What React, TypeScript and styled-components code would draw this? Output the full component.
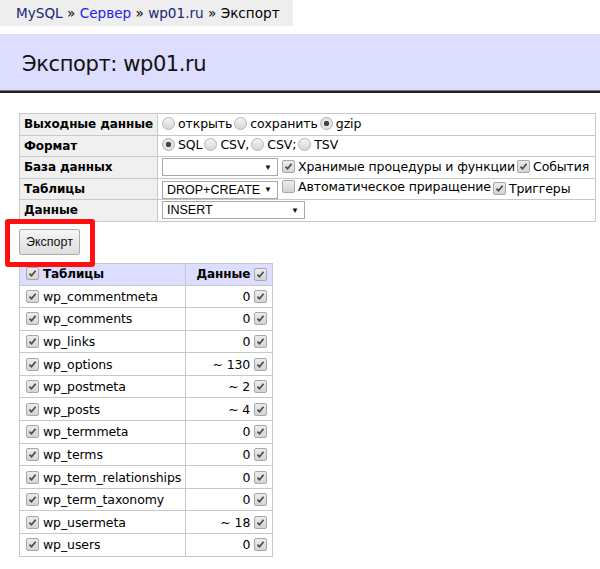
import React from 'react';
import styled, { createGlobalStyle } from 'styled-components';

const GlobalStyle = createGlobalStyle`
  body {
    margin: 0;
    background: #fff;
    font-family: "DejaVu Sans", Verdana, sans-serif;
    font-size: 12.5px;
    letter-spacing: -0.1px;
    color: #000;
  }
`;

const Page = styled.div`
  position: relative;
  width: 600px;
  min-height: 569px;
`;

const Breadcrumbs = styled.div`
  display: inline-block;
  background: #eeeeee;
  padding: 5px 13px 5px 16px;
  height: 16px;
  line-height: 16px;
  font-size: 13.6px;
  letter-spacing: 0;
`;

const Crumb = styled.a<{ $visited?: boolean }>`
  color: ${({ $visited }) => ($visited ? '#22247a' : '#2323e8')};
  text-decoration: none;
`;

const Header = styled.h1`
  margin: 8px 0 0;
  height: 57px;
  line-height: 60px;
  padding-left: 22px;
  background: #ddddff;
  border-bottom: 2px solid #222;
  box-shadow: inset 0 -1px 0 #777;
  font-size: 21px;
  letter-spacing: -0.4px;
  font-weight: normal;
  color: #111;
`;

const Content = styled.div`
  padding: 20px 0 0 19px;
`;

const FormTable = styled.table`
  border-collapse: collapse;
  width: 567px;
  border: 1px solid #c8c8c8;
`;

const Row = styled.tr`
  height: 21.5px;
`;

const LabelCell = styled.th`
  text-align: left;
  font-weight: bold;
  font-size: 12px;
  background: #f0f0f0;
  border: 1px solid #c8c8c8;
  padding: 0 4px;
  white-space: nowrap;
  width: 130px;
`;

const ValueCell = styled.td`
  border: 1px solid #c8c8c8;
  padding: 0 4px;
  white-space: nowrap;
`;

const Option = styled.label`
  display: inline-flex;
  align-items: center;
  gap: 3px;
  margin-right: 2px;
`;

const Radio = styled.span<{ $on?: boolean }>`
  display: inline-block;
  box-sizing: border-box;
  width: 13px;
  height: 13px;
  border-radius: 50%;
  border: 1px solid #b4b4b4;
  background: ${({ $on }) =>
    $on
      ? 'radial-gradient(circle, #444 0 2.5px, #e8e8e8 3px, #d4d4d4 100%)'
      : 'linear-gradient(#f4f4f4, #d6d6d6)'};
`;

const Box = styled.span`
  display: inline-flex;
  align-items: center;
  justify-content: center;
  box-sizing: border-box;
  width: 13px;
  height: 13px;
  border: 1px solid #a8a8a8;
  border-radius: 2px;
  background: linear-gradient(#ececec, #d4d4d4);
  vertical-align: middle;
`;

const Check = ({ on = true }: { on?: boolean }) => (
  <Box>
    {on && (
      <svg width="9" height="9" viewBox="0 0 9 9">
        <path d="M1.5 4.6 L3.5 6.8 L7.6 1.8" fill="none" stroke="#4a4a4a" strokeWidth="1.7" />
      </svg>
    )}
  </Box>
);

const Select = styled.span<{ $w: number }>`
  display: inline-flex;
  align-items: center;
  justify-content: space-between;
  box-sizing: border-box;
  width: ${({ $w }) => $w}px;
  height: 18px;
  padding: 0 5px 0 4px;
  border: 1px solid #a9a9a9;
  background: #fff;
  font-family: "Liberation Sans", Arial, sans-serif;
  font-size: 12.5px;
  letter-spacing: 0;
  vertical-align: middle;
  margin-right: 4px;
`;

const Arrow = styled.span`
  font-size: 8px;
  color: #111;
`;

const Button = styled.button`
  margin-top: 7px;
  height: 26px;
  padding: 0 6px;
  font-family: "Liberation Sans", Arial, sans-serif;
  font-size: 12.5px;
  color: #111;
  border: 1px solid #acacac;
  border-radius: 2px;
  background: linear-gradient(#f6f6f6, #dedede);
`;

const Marker = styled.div`
  position: absolute;
  left: 5px;
  top: 219px;
  width: 90px;
  height: 48px;
  box-sizing: border-box;
  border: 5px solid #ff1010;
  border-radius: 3px;
  pointer-events: none;
`;

const TablesTable = styled.table`
  margin-top: 8px;
  border-collapse: collapse;
  border: 1px solid #c8c8c8;
`;

const HeadCell = styled.th<{ $right?: boolean }>`
  background: #ddddff;
  border: 1px solid #c8c8c8;
  height: 21px;
  padding: 0 5px 0 6px;
  font-weight: bold;
  font-size: 12px;
  text-align: ${({ $right }) => ($right ? 'right' : 'left')};
  white-space: nowrap;
`;

const TableRow = styled.tr`
  height: 22.6px;
`;

const NameCell = styled.td`
  border: 1px solid #c8c8c8;
  padding: 0 4px 0 6px;
  white-space: nowrap;
  width: 155px;
`;

const CountCell = styled.td`
  border: 1px solid #c8c8c8;
  padding: 0 5px 0 6px;
  text-align: right;
  white-space: nowrap;
  width: 75px;
`;

const Inline = styled.span`
  display: inline-flex;
  align-items: center;
  gap: 4px;
`;

const tables: [string, string][] = [
  ['wp_commentmeta', '0'],
  ['wp_comments', '0'],
  ['wp_links', '0'],
  ['wp_options', '~ 130'],
  ['wp_postmeta', '~ 2'],
  ['wp_posts', '~ 4'],
  ['wp_termmeta', '0'],
  ['wp_terms', '0'],
  ['wp_term_relationships', '0'],
  ['wp_term_taxonomy', '0'],
  ['wp_usermeta', '~ 18'],
  ['wp_users', '0'],
];

const App: React.FC = () => (
  <Page>
    <GlobalStyle />
    <Breadcrumbs>
      <Crumb $visited href="#">MySQL</Crumb> » <Crumb href="#">Сервер</Crumb> »{' '}
      <Crumb $visited href="#">wp01.ru</Crumb> » Экспорт
    </Breadcrumbs>
    <Header>Экспорт: wp01.ru</Header>
    <Content>
      <FormTable>
        <tbody>
          <Row>
            <LabelCell>Выходные данные</LabelCell>
            <ValueCell>
              <Option><Radio />открыть</Option>
              <Option><Radio />сохранить</Option>
              <Option><Radio $on />gzip</Option>
            </ValueCell>
          </Row>
          <Row>
            <LabelCell>Формат</LabelCell>
            <ValueCell>
              <Option><Radio $on />SQL</Option>
              <Option><Radio />CSV,</Option>
              <Option><Radio />CSV;</Option>
              <Option><Radio />TSV</Option>
            </ValueCell>
          </Row>
          <Row>
            <LabelCell>База данных</LabelCell>
            <ValueCell>
              <Select $w={116}><span /><Arrow>▼</Arrow></Select>
              <Option><Check />Хранимые процедуры и функции</Option>
              <Option><Check />События</Option>
            </ValueCell>
          </Row>
          <Row>
            <LabelCell>Таблицы</LabelCell>
            <ValueCell>
              <Select $w={116}><span>DROP+CREATE</span><Arrow>▼</Arrow></Select>
              <Option><Check on={false} />Автоматическое приращение</Option>
              <Option><Check />Триггеры</Option>
            </ValueCell>
          </Row>
          <Row>
            <LabelCell>Данные</LabelCell>
            <ValueCell>
              <Select $w={143}><span>INSERT</span><Arrow>▼</Arrow></Select>
            </ValueCell>
          </Row>
        </tbody>
      </FormTable>
      <Button>Экспорт</Button>
      <TablesTable>
        <thead>
          <tr>
            <HeadCell>
              <Inline><Check />Таблицы</Inline>
            </HeadCell>
            <HeadCell $right>
              <Inline>Данные<Check /></Inline>
            </HeadCell>
          </tr>
        </thead>
        <tbody>
          {tables.map(([name, count]) => (
            <TableRow key={name}>
              <NameCell>
                <Inline><Check />{name}</Inline>
              </NameCell>
              <CountCell>
                <Inline>{count}<Check /></Inline>
              </CountCell>
            </TableRow>
          ))}
        </tbody>
      </TablesTable>
    </Content>
    <Marker />
  </Page>
);

export default App;
